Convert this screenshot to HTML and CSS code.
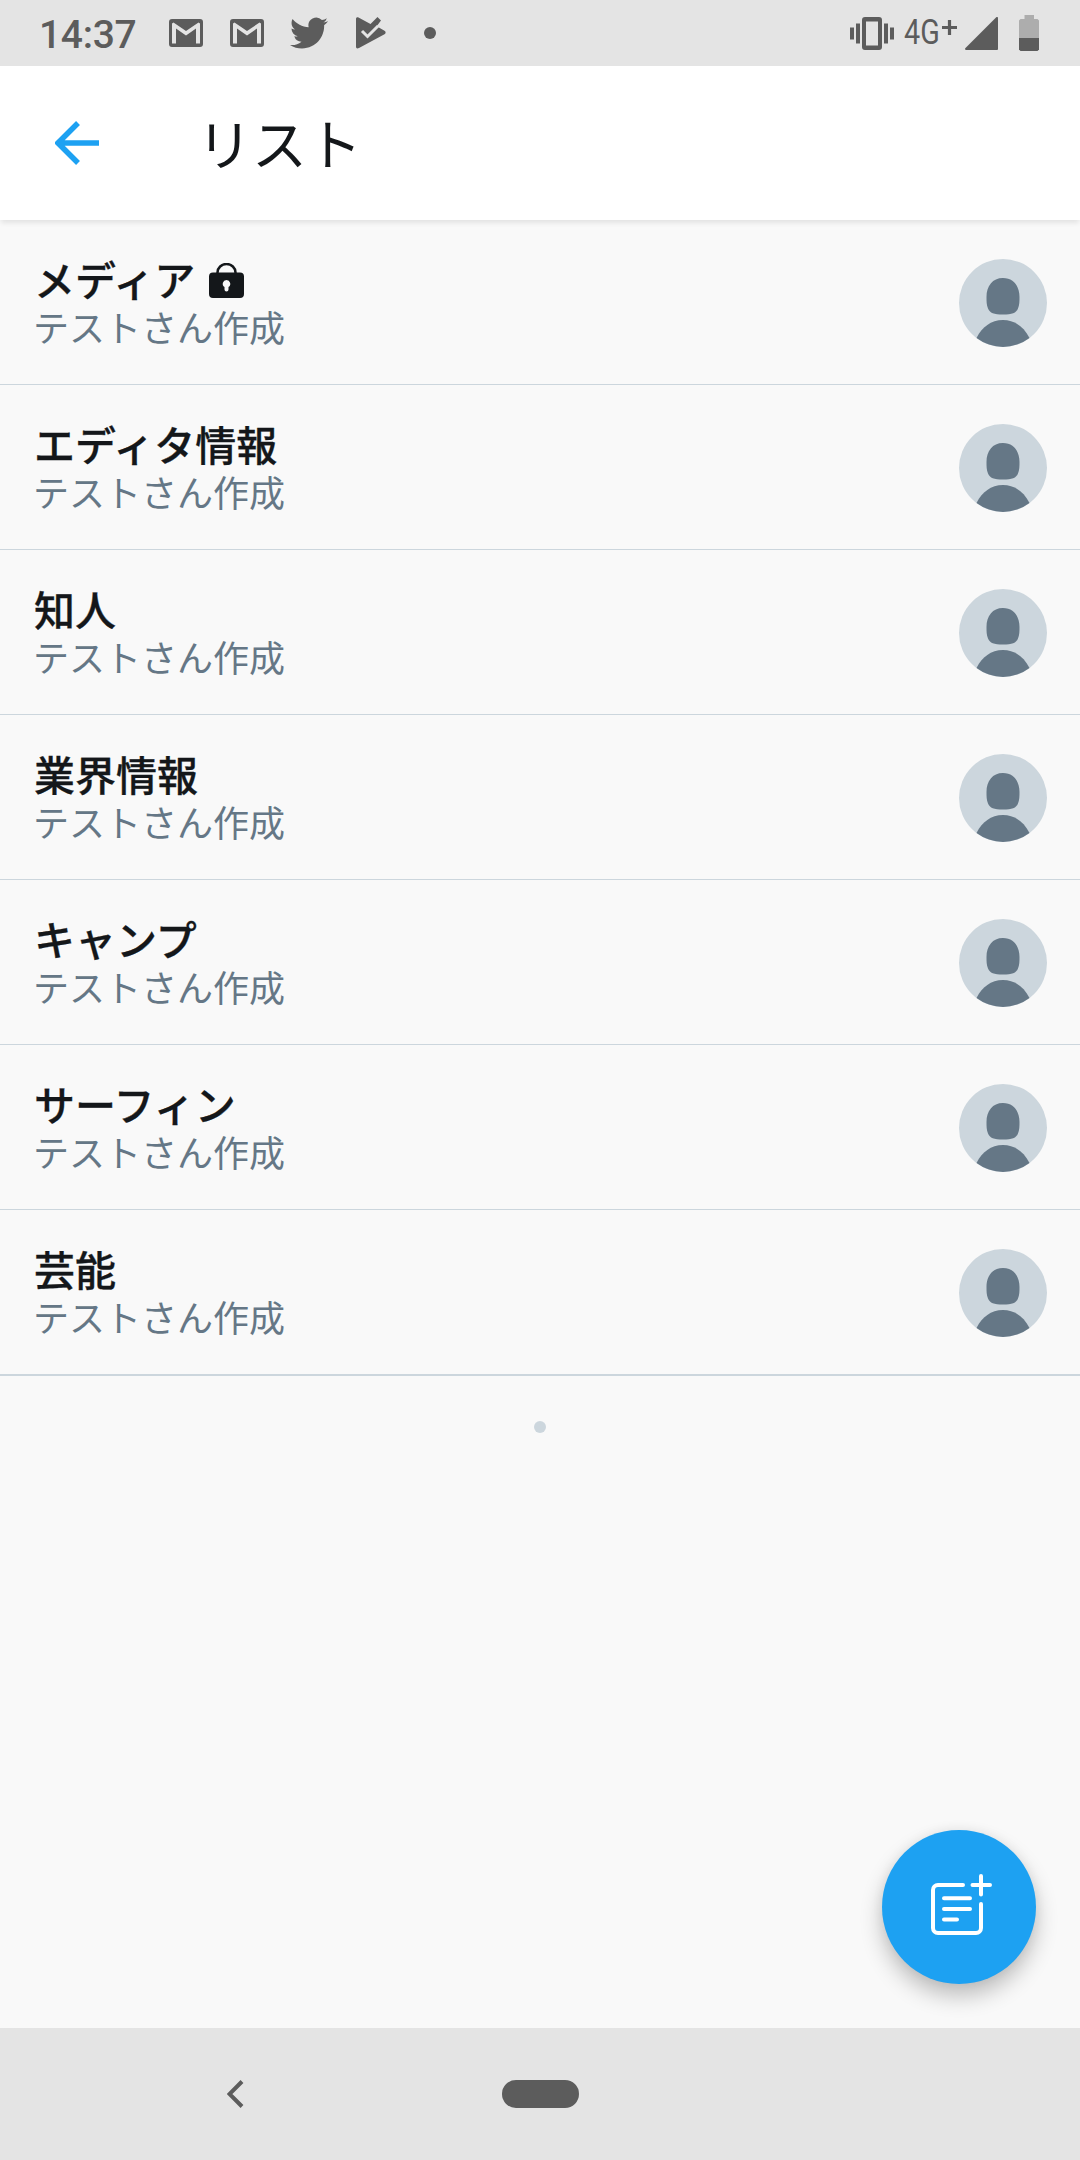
FILE: index.html
```html
<!DOCTYPE html>
<html lang="ja">
<head>
    <meta charset="UTF-8">
    <meta name="viewport" content="width=device-width, initial-scale=1.0">
    <title>リスト</title>
    <link rel="stylesheet" href="styles.css">
</head>
<body>
    <svg class="symbols">
        <symbol id="gmail" viewBox="0 0 34 28">
            <path fill-rule="evenodd" d="M3 0h28a3 3 0 0 1 3 3v22a3 3 0 0 1-3 3H3a3 3 0 0 1-3-3V3a3 3 0 0 1 3-3zM3 24.500h4V9.500l10 7 10-7v15h4V4.500L29.500 3.500 17 12 4.500 3.500 3 4.500z"/>
        </symbol>
        <symbol id="avatar" viewBox="0 0 88 88">
            <circle cx="44" cy="44" r="44" fill="#ccd6dd"/>
            <path fill="#657786" d="M44 19c10.500 0 16.500 8 16.500 19 0 4 0 8-1.500 11.500-1.800 4.500-6 6-15 6s-13.200-1.500-15-6C27.500 46 27.500 42 27.500 38c0-11 6-19 16.500-19z"/>
            <path fill="#657786" d="M17.500 79C23 68 32 61 44 61s21 7 26.500 18A44 44 0 0 1 17.500 79z"/>
        </symbol>
    </svg>

    <div class="status-bar">
        <span class="clock">14:37</span>
        <div class="notifications">
            <svg class="icon-gmail"><use href="#gmail"/></svg>
            <svg class="icon-gmail"><use href="#gmail"/></svg>
            <svg class="icon-twitter" viewBox="0 2 24 20"><path d="M23.950 4.570a10 10 0 0 1-2.820.770 4.960 4.960 0 0 0 2.160-2.720c-.950.550-2 .950-3.130 1.190a4.920 4.920 0 0 0-8.380 4.480C7.690 8.090 4.070 6.130 1.640 3.160a4.820 4.820 0 0 0-.670 2.480c0 1.710.870 3.210 2.190 4.100a4.900 4.900 0 0 1-2.230-.620v.060a4.920 4.920 0 0 0 3.950 4.830 5 5 0 0 1-2.210.080 4.940 4.940 0 0 0 4.600 3.420A9.870 9.870 0 0 1 0 19.540a13.990 13.990 0 0 0 7.560 2.210c9.050 0 14-7.500 14-13.980 0-.210 0-.420-.020-.630a9.940 9.940 0 0 0 2.460-2.550z"/></svg>
            <svg class="icon-play" viewBox="0 0 30 32">
                <path d="M0 2C0 .5 1.200-.200 2.500.500L14.500 7l7-7L25 3.500 12 20.500 6 14.500 7.500 12.500l4 4L22 10l6.500 3.700c1.500 1 1.500 2.600 0 3.600L3 31C1.300 32 0 31.500 0 29.500z"/>
                <path class="tick" d="M6 14l5.500 5.500L22 9"/>
            </svg>
            <span class="more-dot"></span>
        </div>
        <div class="system">
            <svg class="icon-vibrate" viewBox="0 0 44 33">
                <path fill-rule="evenodd" d="M15 0h14a3 3 0 0 1 3 3v27a3 3 0 0 1-3 3H15a3 3 0 0 1-3-3V3a3 3 0 0 1 3-3zm1 4.500v24h12v-24z"/>
                <path d="M0 10.500h4v12H0zM6 6.500h4v20H6zM34 6.500h4v20h-4zM40 10.500h4v12h-4z"/>
            </svg>
            <span class="network">4G</span>
            <svg class="icon-plus" viewBox="0 0 15 15"><path d="M5.900 0h3.200v5.900H15v3.200H9.100V15H5.900V9.100H0V5.900h5.900z"/></svg>
            <svg class="icon-signal" viewBox="0 0 33 33"><path d="M31 .500c1-.900 2-.500 2 .800V32a1 1 0 0 1-1 1H1.200C0 33-.400 32 .500 31z"/></svg>
            <svg class="icon-battery" viewBox="0 0 20 36">
                <path class="battery-empty" d="M5.500 0h9.500v4h3.500L20 5.500V23H0V5.500L1.500 4h4z"/>
                <path d="M0 23h20v11.500L18.500 36h-17L0 34.500z"/>
            </svg>
        </div>
    </div>

    <header class="toolbar">
        <svg class="back" viewBox="0 0 44 44"><path d="M44 22H5M23 2L3 22l20 20"/></svg>
        <h1 class="title">リスト</h1>
    </header>

    <main class="content">
        <ul class="lists">
            <li class="list-item">
                <div class="list-text">
                    <div class="list-name">メディア
                        <svg class="lock" viewBox="0 0 35 35">
                            <path fill-rule="evenodd" d="M4 9.500h27a4 4 0 0 1 4 4V31a4 4 0 0 1-4 4H4a4 4 0 0 1-4-4V13.500a4 4 0 0 1 4-4zm13.500 7.500a3.800 3.800 0 0 0-2 7v2.500a2 2 0 0 0 4 0V24a3.800 3.800 0 0 0-2-7z"/>
                            <path class="shackle" d="M8.500 11v-1.500a9 8.500 0 0 1 18 0V11"/>
                        </svg>
                    </div>
                    <div class="list-owner">テストさん作成</div>
                </div>
                <svg class="avatar"><use href="#avatar"/></svg>
            </li>
            <li class="list-item">
                <div class="list-text">
                    <div class="list-name">エディタ情報</div>
                    <div class="list-owner">テストさん作成</div>
                </div>
                <svg class="avatar"><use href="#avatar"/></svg>
            </li>
            <li class="list-item">
                <div class="list-text">
                    <div class="list-name">知人</div>
                    <div class="list-owner">テストさん作成</div>
                </div>
                <svg class="avatar"><use href="#avatar"/></svg>
            </li>
            <li class="list-item">
                <div class="list-text">
                    <div class="list-name">業界情報</div>
                    <div class="list-owner">テストさん作成</div>
                </div>
                <svg class="avatar"><use href="#avatar"/></svg>
            </li>
            <li class="list-item">
                <div class="list-text">
                    <div class="list-name">キャンプ</div>
                    <div class="list-owner">テストさん作成</div>
                </div>
                <svg class="avatar"><use href="#avatar"/></svg>
            </li>
            <li class="list-item">
                <div class="list-text">
                    <div class="list-name">サーフィン</div>
                    <div class="list-owner">テストさん作成</div>
                </div>
                <svg class="avatar"><use href="#avatar"/></svg>
            </li>
            <li class="list-item">
                <div class="list-text">
                    <div class="list-name">芸能</div>
                    <div class="list-owner">テストさん作成</div>
                </div>
                <svg class="avatar"><use href="#avatar"/></svg>
            </li>
        </ul>
        <div class="end-dot"></div>
        <button class="fab" aria-label="リストを作成">
            <svg viewBox="0 0 62 62">
                <path d="M32 11H7a5 5 0 0 0-5 5v38a5 5 0 0 0 5 5h38a5 5 0 0 0 5-5V30M13 24.300h26M13 35h26M13 45.500h13M41.500 11H59M50 2v18.500"/>
            </svg>
        </button>
    </main>

    <nav class="nav-bar">
        <svg class="nav-back" viewBox="0 0 17 28"><path d="M15 1.500L2.500 14 15 26.500"/></svg>
        <span class="nav-home"></span>
    </nav>
</body>
</html>
```

FILE: styles.css
```css
* {
    box-sizing: border-box;
}
body {
    font-family: Roboto, "Noto Sans CJK JP", sans-serif;
    background-color: #f9f9f9;
    color: #14171a;
    margin: 0;
    height: 2160px;
    display: flex;
    flex-direction: column;
    overflow: hidden;
}
svg {
    display: block;
    flex-shrink: 0;
}
.symbols {
    display: none;
}

/* status bar */
.status-bar {
    height: 66px;
    background-color: #e4e4e4;
    color: #5c5c5c;
    fill: #5c5c5c;
    display: flex;
    align-items: center;
    padding: 0 41px 0 39px;
}
.clock {
    font-size: 39px;
    font-weight: 500;
    line-height: 66px;
    letter-spacing: -0.3px;
    width: 130px;
    padding-top: 3px;
}
.notifications {
    display: flex;
    align-items: center;
    flex: 1;
}
.icon-gmail {
    width: 34px;
    height: 28px;
    margin-right: 27px;
}
.icon-gmail + .icon-twitter {
    margin-left: -1px;
}
.icon-twitter {
    width: 38px;
    height: 32px;
    margin-right: 28px;
}
.icon-play {
    width: 30px;
    height: 32px;
    margin-right: 38px;
}
.tick {
    fill: none;
    stroke: #e4e4e4;
    stroke-width: 3;
}
.more-dot {
    width: 12px;
    height: 12px;
    border-radius: 50%;
    background-color: #5c5c5c;
}
.system {
    display: flex;
    align-items: center;
}
.icon-vibrate {
    width: 44px;
    height: 33px;
    margin-right: 10px;
}
.network {
    font-size: 35px;
    width: 38px;
    line-height: 66px;
    transform: scaleX(0.82);
    transform-origin: left;
}
.icon-plus {
    width: 15px;
    height: 15px;
    margin: 0 8px 12px 0;
}
.icon-signal {
    width: 33px;
    height: 33px;
    margin-right: 21px;
}
.icon-battery {
    width: 20px;
    height: 36px;
}
.battery-empty {
    fill: #adadad;
}

/* toolbar */
.toolbar {
    position: relative;
    height: 154px;
    background-color: #fff;
    display: flex;
    align-items: center;
    padding-left: 55px;
    box-shadow: 0 4px 5px -1px rgba(0, 0, 0, 0.09);
}
.back {
    width: 44px;
    height: 44px;
    fill: none;
    stroke: #1da1f2;
    stroke-width: 5.5;
}
.title {
    margin: 0 0 0 98px;
    padding-top: 6px;
    font-size: 55px;
    font-weight: 400;
    line-height: 80px;
}

/* lists */
.content {
    flex: 1;
}
.lists {
    list-style: none;
    margin: 0;
    padding: 0;
}
.list-item {
    height: 165px;
    padding: 39px 33px 0 33px;
    border-bottom: 1px solid #ccd6dd;
    display: flex;
    justify-content: space-between;
}
.list-item:last-child {
    height: 166px;
    border-bottom-width: 2px;
}
.list-name {
    font-size: 41px;
    font-weight: 500;
    line-height: 47px;
    padding-left: 1px;
    display: flex;
    align-items: center;
    -webkit-text-stroke: 0.3px #14171a;
}
.lock {
    width: 35px;
    height: 35px;
    margin: 0 0 4px 14px;
    fill: #14171a;
}
.lock .shackle {
    fill: none;
    stroke: #14171a;
    stroke-width: 2.5;
}
.list-owner {
    font-size: 36px;
    line-height: 48px;
    color: #657786;
}
.avatar {
    width: 88px;
    height: 88px;
}
.end-dot {
    width: 12px;
    height: 12px;
    margin: 45px auto 0;
    border-radius: 50%;
    background-color: #ccd6dd;
}
.fab {
    position: absolute;
    right: 44px;
    bottom: 176px;
    width: 154px;
    height: 154px;
    padding: 0 0 4px 6px;
    border: none;
    border-radius: 50%;
    background-color: #1da1f2;
    box-shadow: 0 12px 22px rgba(0, 0, 0, 0.24), 0 0 12px rgba(0, 0, 0, 0.06);
    display: flex;
    align-items: center;
    justify-content: center;
}
.fab svg {
    width: 62px;
    height: 62px;
    fill: none;
    stroke: #fff;
    stroke-width: 4;
    stroke-linecap: round;
}

/* navigation bar */
.nav-bar {
    height: 132px;
    background-color: #e4e4e4;
    display: flex;
    align-items: center;
    padding-left: 227px;
}
.nav-back {
    width: 17px;
    height: 28px;
    fill: none;
    stroke: #5c5c5c;
    stroke-width: 4;
}
.nav-home {
    width: 77px;
    height: 28px;
    margin-left: 258px;
    border-radius: 14px;
    background-color: #5c5c5c;
}
```
